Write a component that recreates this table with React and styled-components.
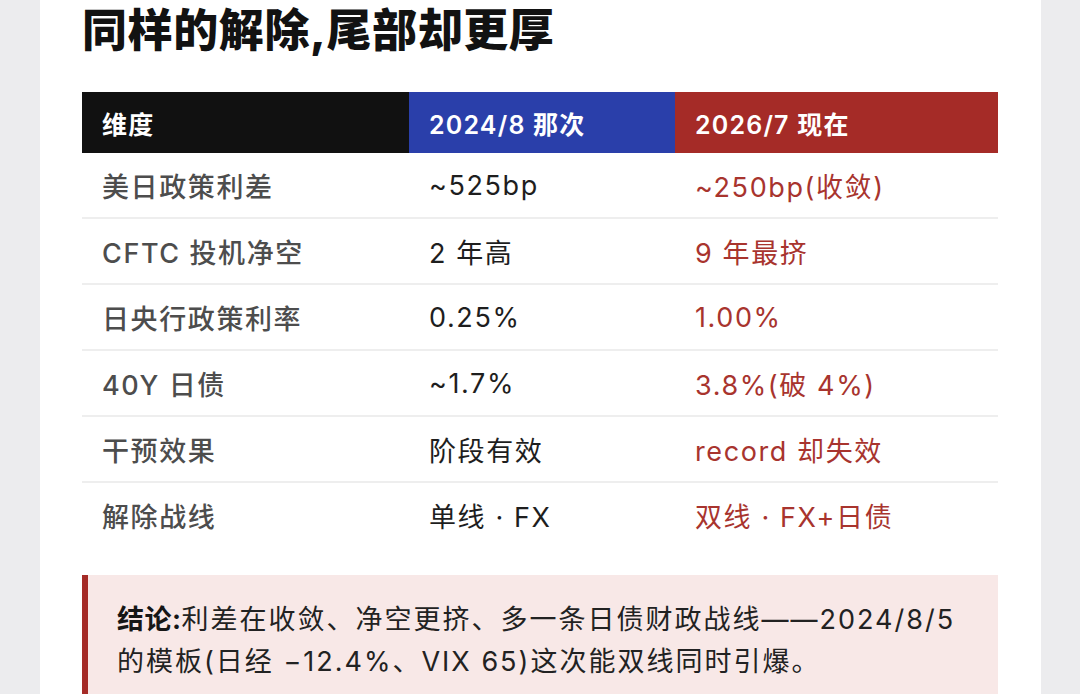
import React from "react";
import styled, { createGlobalStyle } from "styled-components";

const rows = [
  { label: "美日政策利差", before: "~525bp", now: "~250bp(收敛)" },
  { label: "CFTC 投机净空", before: "2 年高", now: "9 年最挤" },
  { label: "日央行政策利率", before: "0.25%", now: "1.00%" },
  { label: "40Y 日债", before: "~1.7%", now: "3.8%(破 4%)" },
  { label: "干预效果", before: "阶段有效", now: "record 却失效" },
  { label: "解除战线", before: "单线 · FX", now: "双线 · FX+日债" },
];

function App() {
  return (
    <>
      <GlobalStyle />
      <Page>
        <Card>
          <Title>同样的解除,尾部却更厚</Title>
          <Table>
            <HeadCell $bg="#111111">维度</HeadCell>
            <HeadCell $bg="#2a3faa">2024/8 那次</HeadCell>
            <HeadCell $bg="#a52b27">2026/7 现在</HeadCell>
            {rows.map((r, i) => (
              <React.Fragment key={r.label}>
                <Cell $last={i === rows.length - 1} $tone="label">
                  {r.label}
                </Cell>
                <Cell $last={i === rows.length - 1}>{r.before}</Cell>
                <Cell $last={i === rows.length - 1} $tone="now">
                  {r.now}
                </Cell>
              </React.Fragment>
            ))}
          </Table>
          <Callout>
            <strong>结论:</strong>利差在收敛、净空更挤、多一条日债财政战线——2024/8/5
            <br />
            的模板(日经 −12.4%、VIX 65)这次能双线同时引爆。
          </Callout>
        </Card>
      </Page>
    </>
  );
}

const GlobalStyle = createGlobalStyle`
  html, body {
    margin: 0;
    padding: 0;
    background: #ececee;
    font-family: Inter, "Noto Sans CJK SC", sans-serif;
  }
`;

const Page = styled.div`
  display: flex;
  height: 694px;
  overflow: hidden;
  padding-left: 40px;
`;

const Card = styled.div`
  width: 1001px;
  background: #ffffff;
  padding: 4px 43px 0 42px;
  box-sizing: border-box;
`;

const Title = styled.h1`
  margin: 0 0 35px;
  font-size: 45px;
  line-height: 53px;
  font-weight: 800;
  color: #121212;
  letter-spacing: 0.6px;
`;

const Table = styled.div`
  display: grid;
  grid-template-columns: 327px 266px 1fr;
`;

const HeadCell = styled.div`
  height: 61px;
  display: flex;
  align-items: center;
  padding-left: 20px;
  background: ${(p) => p.$bg};
  color: #ffffff;
  font-size: 25px;
  font-weight: 600;
  letter-spacing: 1.2px;
`;

const toneColor = {
  label: "#4d4d4d",
  now: "#a8342e",
};

const Cell = styled.div`
  height: 64px;
  display: flex;
  align-items: center;
  padding-left: 20px;
  border-bottom: 2px solid ${(p) => (p.$last ? "transparent" : "#eeeeee")};
  color: ${(p) => toneColor[p.$tone] || "#1e1e1e"};
  font-size: 27px;
  font-weight: ${(p) => (p.$tone === "label" ? 500 : 400)};
  letter-spacing: 1.6px;
  white-space: nowrap;
`;

const Callout = styled.div`
  margin-top: 26px;
  background: #f8e8e7;
  border-left: 6px solid #a52b27;
  padding: 24px 20px 24px 29px;
  font-size: 27px;
  line-height: 42px;
  letter-spacing: 2px;
  color: #222222;
  white-space: nowrap;

  strong {
    font-weight: 700;
    color: #161616;
    letter-spacing: 0.5px;
  }
`;

export default App;
